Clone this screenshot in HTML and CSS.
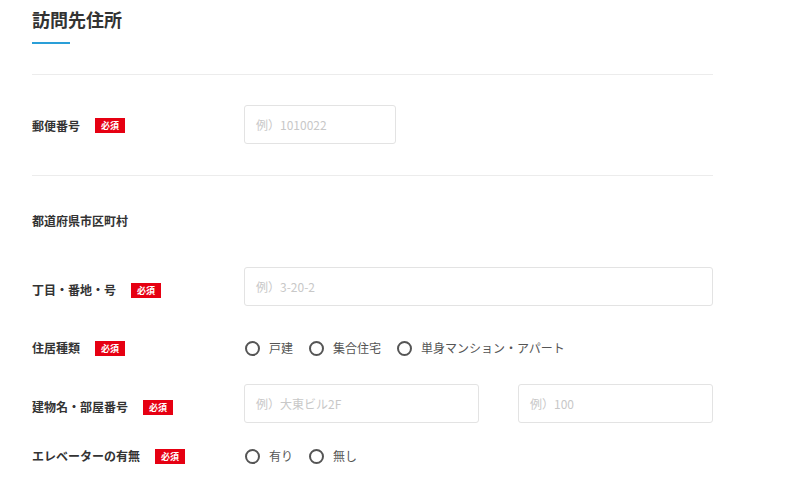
FILE: index.html
```html
<!DOCTYPE html>
<html lang="ja">
<head>
<meta charset="utf-8">
<link rel="stylesheet" href="styles.css">
</head>
<body>
<div class="page">
  <h1 class="title">訪問先住所</h1>
  <div class="title-bar"></div>
  <hr class="sep sep-first">
  <div class="row row-zip">
    <div class="label"><span>郵便番号</span><span class="req">必須</span></div>
    <div class="field"><div class="input w-zip">例）1010022</div></div>
  </div>
  <hr class="sep">
  <div class="row row-pref">
    <div class="label label-plain"><span>都道府県市区町村</span></div>
  </div>
  <div class="row row-street">
    <div class="label label-low"><span>丁目・番地・号</span><span class="req">必須</span></div>
    <div class="field"><div class="input w-full">例）3-20-2</div></div>
  </div>
  <div class="row row-type">
    <div class="label"><span>住居種類</span><span class="req">必須</span></div>
    <div class="field radios">
      <span class="radio"><i class="circle"></i>戸建</span>
      <span class="radio"><i class="circle"></i>集合住宅</span>
      <span class="radio"><i class="circle"></i>単身マンション・アパート</span>
    </div>
  </div>
  <div class="row row-building">
    <div class="label label-low"><span>建物名・部屋番号</span><span class="req">必須</span></div>
    <div class="field split">
      <div class="input w-building">例）大東ビル2F</div>
      <div class="input w-room">例）100</div>
    </div>
  </div>
  <div class="row row-elev">
    <div class="label"><span>エレベーターの有無</span><span class="req">必須</span></div>
    <div class="field radios">
      <span class="radio"><i class="circle"></i>有り</span>
      <span class="radio"><i class="circle"></i>無し</span>
    </div>
  </div>
</div>
</body>
</html>
```
FILE: styles.css
```css
* { box-sizing: border-box; }
html, body { margin: 0; padding: 0; background: #fff; }
body {
  font-family: "Noto Sans CJK JP", "Noto Sans", sans-serif;
  color: #333;
}
.page {
  padding-left: 32px;
  width: 713px;
}
.title {
  margin: 5px 0 0;
  font-size: 18px;
  line-height: 28px;
  font-weight: 700;
  color: #333;
}
.title-bar {
  margin-top: 9px;
  width: 38px;
  height: 2px;
  background: #2a9fd8;
}
.sep {
  margin: 0;
  border: 0;
  border-top: 1px solid #ececec;
  height: 0;
}
.sep-first { margin-top: 30px; }
.row {
  display: flex;
  align-items: center;
}
.label {
  width: 212px;
  flex: none;
  display: flex;
  align-items: center;
  font-size: 12px;
  line-height: 18px;
  font-weight: 700;
  color: #333;
}
.label-low { padding-top: 7px; }
.req {
  margin-left: 15px;
  width: 30px;
  height: 15px;
  background: #e60012;
  color: #fff;
  font-size: 9px;
  line-height: 15px;
  text-align: center;
  font-weight: 700;
}
.field { display: flex; align-items: center; }
.input {
  height: 39px;
  border: 1px solid #e3e3e3;
  border-radius: 3px;
  padding-left: 11px;
  font-size: 12px;
  line-height: 37px;
  color: #c8c8c8;
  background: #fff;
}
.w-zip { width: 152px; }
.w-full { width: 469px; }
.w-building { width: 235px; }
.w-room { width: 195px; margin-left: 39px; }
.row-zip { padding: 30px 0 31px; }
.row-zip .label { padding-top: 2px; }
.row-pref { margin-top: 36px; }
.row-street { margin-top: 37px; }
.row-type { margin-top: 33px; }
.row-building { margin-top: 27px; }
.row-elev { margin-top: 24px; }
.radios { font-size: 12px; line-height: 18px; color: #555; }
.radio {
  display: inline-flex;
  align-items: center;
  margin-right: 16px;
  margin-left: 1px;
}
.radio + .radio { margin-left: 0; }
.circle {
  display: inline-block;
  width: 15px;
  height: 15px;
  border: 2px solid #555;
  border-radius: 50%;
  margin-right: 9px;
}
```
